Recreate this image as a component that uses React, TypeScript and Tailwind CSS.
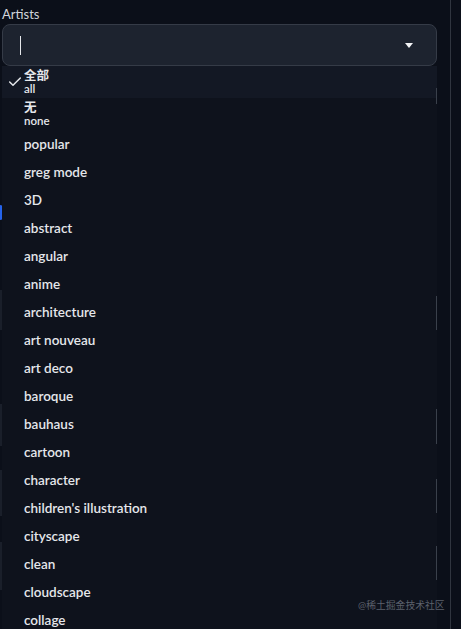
import { Check } from "lucide-react";

const options = [
  "popular",
  "greg mode",
  "3D",
  "abstract",
  "angular",
  "anime",
  "architecture",
  "art nouveau",
  "art deco",
  "baroque",
  "bauhaus",
  "cartoon",
  "character",
  "children's illustration",
  "cityscape",
  "clean",
  "cloudscape",
  "collage",
];

// faint pieces of the form that sit behind the open list
const edgeMarks = [
  { top: 290, height: 40 },
  { top: 404, height: 42 },
  { top: 470, height: 46 },
  { top: 542, height: 48 },
];

const rightMarks = [
  { top: 88, height: 16 },
  { top: 296, height: 34 },
  { top: 409, height: 35 },
  { top: 479, height: 34 },
  { top: 546, height: 34 },
];

export default function App() {
  return (
    <div
      className="relative flex h-[629px] w-[461px] overflow-hidden bg-[#0b0f19] text-[#e5e7eb]"
      style={{ fontFamily: '"Lato", "Noto Sans CJK SC", sans-serif' }}
    >
      <div className="relative w-[451px] border-r border-[#30353f]">
        <div className="px-[2px] pt-[5px]">
          <div className="text-[13px] leading-[18px] text-[#d1d5db]">Artists</div>
          <div className="mt-[1px] flex h-[42px] w-[435px] items-center rounded-lg border border-[#353b47] bg-[#1d232f] pl-[17px] pr-[23px]">
            <span className="h-[19px] w-px bg-[#e5e7eb]" />
            <svg className="ml-auto h-[5px] w-[8px]" viewBox="0 0 8 5">
              <path d="M0 0 L8 0 L4 5 Z" fill="#f3f4f6" />
            </svg>
          </div>
        </div>

        {edgeMarks.map((m, i) => (
          <div
            key={i}
            className="absolute left-0 w-[3px] bg-[#1a1f2a]"
            style={{ top: m.top, height: m.height }}
          />
        ))}
        <div className="absolute left-0 top-[205px] h-[15px] w-[3px] rounded-r bg-[#2563eb]" />

        <div className="absolute left-[2px] top-[66px] w-[435px] bg-[#0e121c]">
          <div className="flex h-[32px] items-center bg-[#131824]">
            <Check className="ml-[5px] mr-[1px] h-[16px] w-[16px]" strokeWidth={2.2} />
            <div className="flex flex-col">
              <span className="block text-[12.5px] font-semibold leading-[14px]">全部</span>
              <span className="block text-[11.5px] font-semibold leading-[12px]">all</span>
            </div>
          </div>
          <div className="flex h-[32px] items-center pl-[22px]">
            <div className="flex flex-col">
              <span className="block text-[12.5px] font-semibold leading-[14px]">无</span>
              <span className="block text-[11.5px] font-semibold leading-[12px]">none</span>
            </div>
          </div>
          {options.map((o) => (
            <div key={o} className="flex h-[28px] items-center pl-[22px] text-[13.5px] font-semibold">
              {o}
            </div>
          ))}
        </div>

        {rightMarks.map((m, i) => (
          <div
            key={i}
            className="absolute left-[436px] w-px bg-[#3a404b]"
            style={{ top: m.top, height: m.height }}
          />
        ))}

        <div className="absolute left-[358px] top-[598px] whitespace-nowrap text-[9.8px] text-[#5c616c]">
          @稀土掘金技术社区
        </div>
      </div>
      <div className="flex-1" />
    </div>
  );
}
